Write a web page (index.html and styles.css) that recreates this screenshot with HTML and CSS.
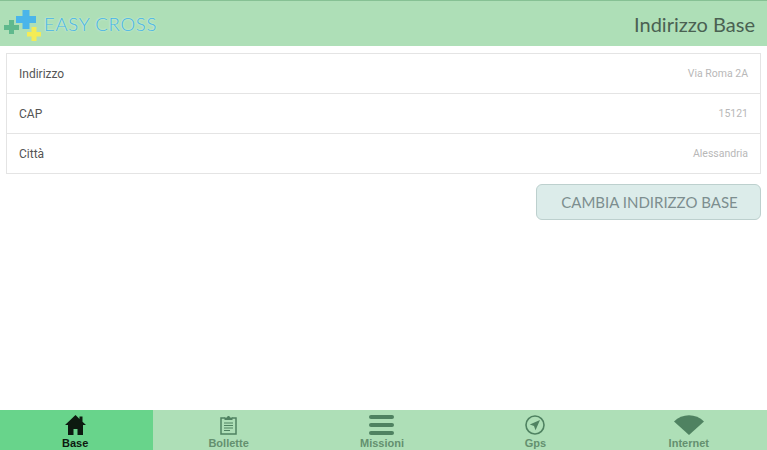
FILE: index.html
```html
<!DOCTYPE html>
<html lang="it">
<head>
    <meta charset="UTF-8">
    <title>Indirizzo Base</title>
    <link rel="stylesheet" href="styles.css">
</head>
<body>
    <header class="topbar">
        <div class="logo">
            <svg class="logo-mark" width="41" height="40" viewBox="0 0 41 40">
                <path fill="#5fb98d" d="M9 16v5H4v5h5v4h5v-4h5v-5h-5v-5z"/>
                <path fill="#4ab5ea" d="M22.500 6v6H16v7h6.500v6h7v-6H36v-7h-6.500V6z"/>
                <path fill="#f4ec55" d="M31.500 23v5H27v4.500h4.500V37h5v-4.500H41V28h-4.500v-5z"/>
            </svg>
            <span class="logo-text">EASY CROSS</span>
        </div>
        <h1 class="page-title">Indirizzo Base</h1>
    </header>

    <main class="content">
        <ul class="info-list">
            <li class="info-row"><span>Indirizzo</span><span class="info-value">Via Roma 2A</span></li>
            <li class="info-row"><span>CAP</span><span class="info-value">15121</span></li>
            <li class="info-row"><span>Città</span><span class="info-value">Alessandria</span></li>
        </ul>
        <div class="actions">
            <button class="change-btn">CAMBIA INDIRIZZO BASE</button>
        </div>
    </main>

    <nav class="tabs">
        <a class="tab active">
            <svg width="21" height="20" viewBox="0 0 21 20"><path fill="currentColor" d="M10.500 0L0 10h3v10h5.500v-6h4v6H18V10h3l-3.500-3.300V1.500h-3v2.400z"/></svg>
            <span>Base</span>
        </a>
        <a class="tab">
            <svg width="17" height="20" viewBox="0 0 17 20" fill="none" stroke="currentColor"><path stroke-width="1.500" d="M5 3H1v16h15V3h-4"/><path fill="currentColor" stroke="none" d="M4.500 2.500H7C7 .5 10 .5 10 2.500h2.500V5h-8z"/><path stroke-width="1" d="M4 8h9M4 10.500h9M4 13h9M4 15.500h6"/></svg>
            <span>Bollette</span>
        </a>
        <a class="tab">
            <svg width="25" height="20" viewBox="0 0 25 20"><g fill="currentColor"><rect y="0" width="25" height="4" rx="2"/><rect y="8" width="25" height="4" rx="2"/><rect y="16" width="25" height="4" rx="2"/></g></svg>
            <span>Missioni</span>
        </a>
        <a class="tab">
            <svg width="20" height="20" viewBox="0 0 20 20"><circle cx="10" cy="10" r="9" fill="none" stroke="currentColor" stroke-width="1.600"/><path fill="currentColor" d="M15 5L4.800 9.500 9 11l1.500 4.200z"/></svg>
            <span>Gps</span>
        </a>
        <a class="tab">
            <svg width="30" height="20" viewBox="0 0 30 20"><path fill="currentColor" d="M0 6.500C8-2 22-2 30 6.500L15 20z"/></svg>
            <span>Internet</span>
        </a>
    </nav>
</body>
</html>
```

FILE: styles.css
```css
* {
    box-sizing: border-box;
}
body {
    margin: 0;
    height: 450px;
    display: flex;
    flex-direction: column;
    overflow: hidden;
    background-color: #fff;
    font-family: Roboto, sans-serif;
    color: #555;
}
.topbar {
    height: 46px;
    padding: 0 12px 0 0;
    display: flex;
    align-items: center;
    justify-content: space-between;
    background-color: #aedfb7;
    border-top: 1px solid #86c194;
}
.logo {
    display: flex;
    align-items: center;
    gap: 3px;
}
.logo-text {
    font-family: Lato, sans-serif;
    font-weight: 300;
    font-size: 18.500px;
    letter-spacing: 0.7px;
    color: #45b4e6;
    text-shadow: 0 0 2px #dff5ee;
}
.page-title {
    margin: 0;
    font-family: Lato, sans-serif;
    font-weight: 400;
    font-size: 20px;
    color: #4a6152;
}
.content {
    flex: 1;
    padding: 7px 6px 0;
}
.info-list {
    margin: 0;
    padding: 0;
    list-style: none;
    background-color: #fff;
    border: 1px solid #e4e4e4;
}
.info-row {
    height: 40px;
    padding: 0 12px;
    display: flex;
    align-items: center;
    justify-content: space-between;
    font-size: 12px;
    border-bottom: 1px solid #e4e4e4;
}
.info-row:last-child {
    height: 39px;
    border-bottom: none;
}
.info-value {
    font-size: 10.500px;
    color: #b8b8b8;
}
.actions {
    display: flex;
    justify-content: flex-end;
    margin-top: 10px;
}
.change-btn {
    width: 225px;
    height: 36px;
    padding: 0 0 0 2px;
    background-color: #dcecea;
    border: 1px solid #bdd0ce;
    border-radius: 6px;
    font-family: Lato, sans-serif;
    font-size: 15px;
    color: #7d8e8f;
}
.tabs {
    height: 40px;
    display: grid;
    grid-template-columns: repeat(5, 1fr);
    background-color: #aedfb7;
}
.tab {
    display: flex;
    flex-direction: column;
    align-items: center;
    padding: 5px 3px 0 0;
    overflow: hidden;
    color: #4f8261;
}
.tab svg {
    display: block;
    flex: none;
}
.tab span {
    margin-top: 2px;
    font-family: "Liberation Sans", sans-serif;
    font-weight: 700;
    font-size: 11px;
    line-height: 12px;
    color: #64906f;
}
.tab.active {
    background-color: #68d48b;
    color: #0d1a10;
}
.tab.active span {
    color: #0d1a10;
}
```
